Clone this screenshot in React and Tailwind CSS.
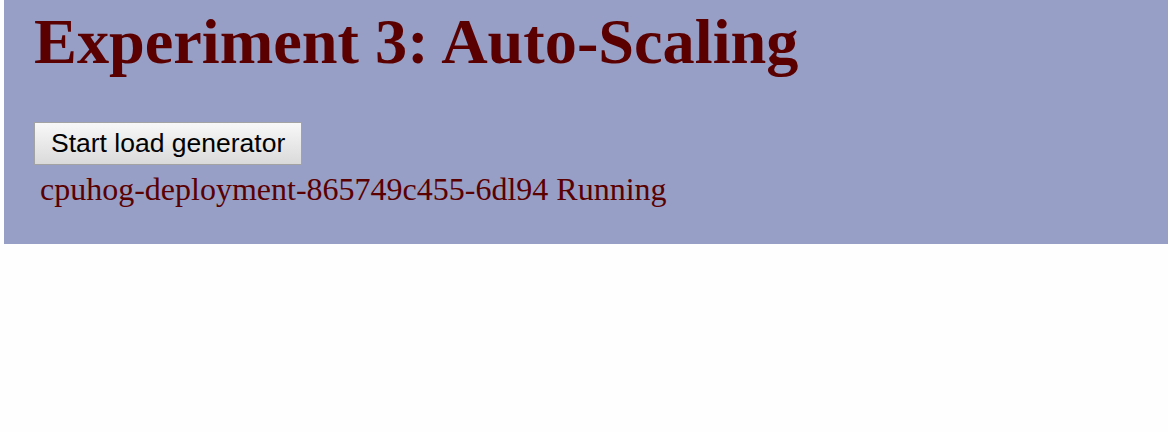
import React from "react";

const App = () => {
  return (
    <div className="min-h-screen bg-[#fefefe] pl-1">
      <div className="bg-[#979fc6] h-[244px] pl-[30px] pt-[5px]">
        <h1 className="font-['Liberation_Serif',serif] font-bold text-[64.3px] leading-[74px] text-[#5a0000]">
          Experiment 3: Auto-Scaling
        </h1>
        <button className="mt-[43px] h-[43px] px-4 font-['Liberation_Sans',Arial,sans-serif] text-[26.5px] text-black border border-[#a3a3a3] bg-gradient-to-b from-[#f8f8f8] to-[#dadada]">
          Start load generator
        </button>
        <p className="mt-[6px] pl-[6px] font-['Liberation_Serif',serif] text-[32px] leading-[37px] text-[#5a0000]">
          cpuhog-deployment-865749c455-6dl94 Running
        </p>
      </div>
    </div>
  );
};

export default App;
